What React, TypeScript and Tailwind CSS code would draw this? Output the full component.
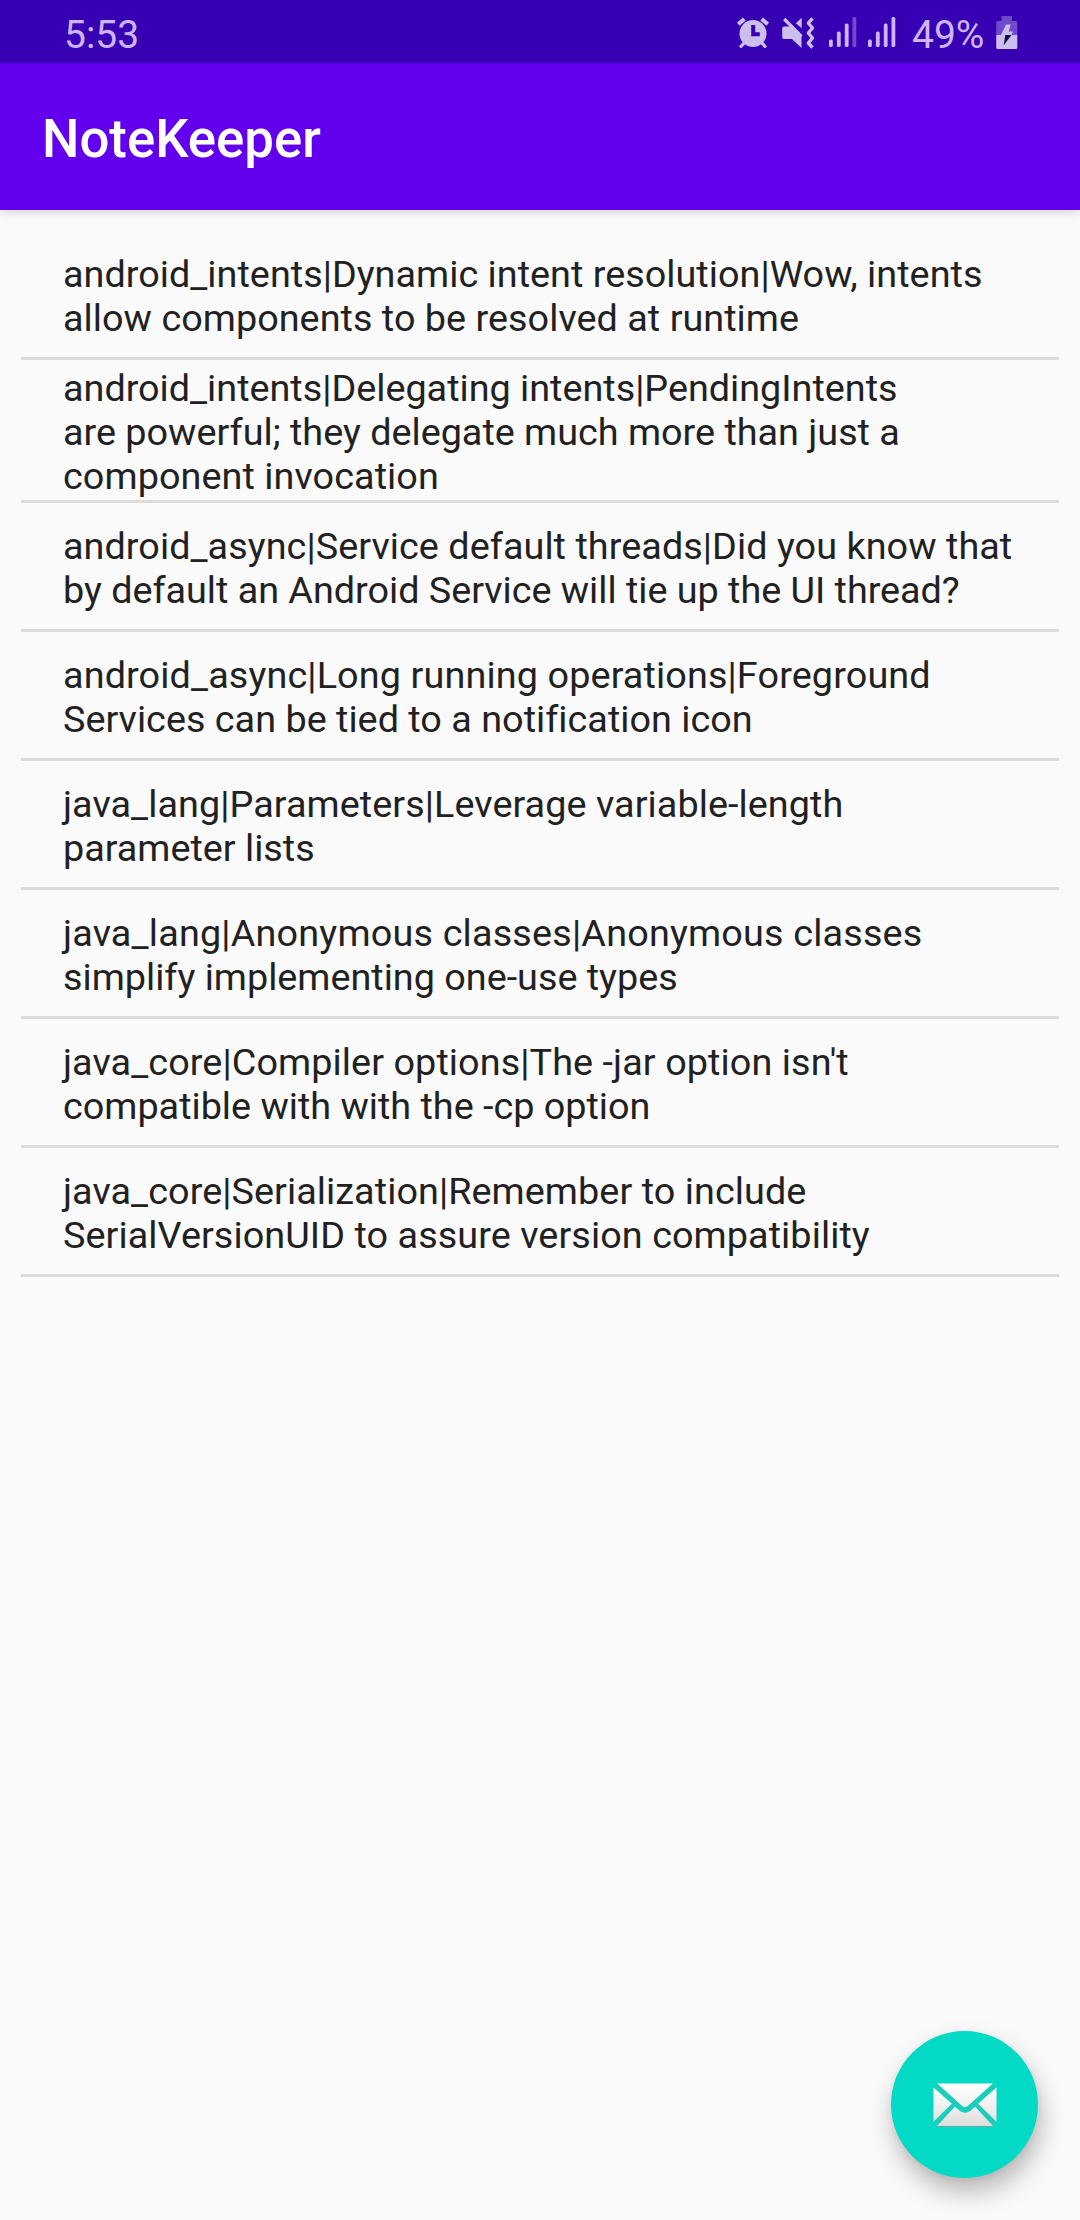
type Line = { text: string; tracking?: number };

// Each note is a list of lines; tracking is letter spacing in pixels.
const notes: Line[][] = [
  [
    { text: 'android_intents|Dynamic intent resolution|Wow, intents', tracking: 0.03 },
    { text: 'allow components to be resolved at runtime', tracking: 0.04 },
  ],
  [
    { text: 'android_intents|Delegating intents|PendingIntents' },
    { text: 'are powerful; they delegate much more than just a' },
    { text: 'component invocation', tracking: 0.08 },
  ],
  [
    { text: 'android_async|Service default threads|Did you know that', tracking: 0.06 },
    { text: 'by default an Android Service will tie up the UI thread?', tracking: -0.02 },
  ],
  [
    { text: 'android_async|Long running operations|Foreground', tracking: 0.13 },
    { text: 'Services can be tied to a notification icon', tracking: 0.02 },
  ],
  [
    { text: 'java_lang|Parameters|Leverage variable-length', tracking: 0.07 },
    { text: 'parameter lists' },
  ],
  [
    { text: 'java_lang|Anonymous classes|Anonymous classes', tracking: 0.19 },
    { text: 'simplify implementing one-use types' },
  ],
  [
    { text: "java_core|Compiler options|The -jar option isn't", tracking: 0.09 },
    { text: 'compatible with with the -cp option' },
  ],
  [
    { text: 'java_core|Serialization|Remember to include', tracking: 0.07 },
    { text: 'SerialVersionUID to assure version compatibility', tracking: 0.08 },
  ],
];

function AlarmIcon() {
  return (
    <svg className="h-[34px] w-[34px]" viewBox="0 0 34 34">
      <circle cx="17" cy="18.5" r="13.5" fill="#cdbfec" />
      <g stroke="#cdbfec" fill="none">
        <path d="M2.300 9.300 8.300 3.900M31.700 9.300 25.700 3.900" strokeWidth="4" />
        <path d="M5 31.300 9 27M29 31.300 25 27" strokeWidth="3.200" strokeLinecap="round" />
      </g>
      <path d="M17.200 10v9.200h6.600" fill="none" stroke="#3700b3" strokeWidth="4" />
    </svg>
  );
}

function MutedIcon() {
  return (
    <svg className="h-[34px] w-[34px]" viewBox="0 0 34 34">
      <g fill="#cdbfec">
        <path d="M3 11.500h6.500l11 9.500v12L11 24H3a1.800 1.800 0 0 1-1.800-1.800v-8.900A1.800 1.800 0 0 1 3 11.500Z" />
        <path d="M20.700 2.800v10.400L14.800 8.300Z" />
      </g>
      <path d="M3.200 4 20.500 21.300" stroke="#cdbfec" strokeWidth="3.200" />
      <path d="M31.500 3.300 27.300 8l4.200 5-4.200 5 4.200 5-4.200 5 4.200 4.500" fill="none" stroke="#cdbfec" strokeWidth="3.300" strokeLinejoin="round" />
    </svg>
  );
}

function SignalIcon({ weak = false }: { weak?: boolean }) {
  return (
    <svg className="h-[32px] w-[28px]" viewBox="0 0 28 32" fill="#cdb5fb">
      <rect x="0" y="23.500" width="3.800" height="7.500" rx="1.500" />
      <rect x="7.900" y="15.500" width="3.800" height="15.500" rx="1.500" />
      <rect x="15.800" y="7.500" width="3.800" height="23.500" rx="1.500" />
      <rect x="23.500" y="1" width="3.800" height="30" rx="1.500" opacity={weak ? 0.4 : 1} />
    </svg>
  );
}

function BatteryIcon() {
  return (
    <svg className="mt-[2px] h-[34px] w-[22px]" viewBox="0 0 22 34">
      <path d="M6 0h9a1 1 0 0 1 1 1v4h4a1.300 1.300 0 0 1 1.300 1.300V19H.2V6.300A1.300 1.300 0 0 1 1.500 5H5.500V1a1 1 0 0 1 1-1Z" fill="#6f4bcb" />
      <path d="M.2 19h21.100v12.500a1.500 1.500 0 0 1-1.500 1.500H1.700a1.500 1.500 0 0 1-1.500-1.500Z" fill="#cdbfec" />
      <path d="M10 8.500h4.700L12.700 15.500h4.200L15.500 19H5Z" fill="#cdbfec" />
      <path d="M9.300 19h6.200L7.600 29.500Z" fill="#16103a" />
    </svg>
  );
}

function MailIcon() {
  return (
    <svg className="h-[44px] w-[64px]" viewBox="0 0 64 44">
      <defs>
        <linearGradient id="paper" x1="0" y1="0" x2="0" y2="44" gradientUnits="userSpaceOnUse">
          <stop offset="0" stopColor="#ffffff" />
          <stop offset="0.450" stopColor="#f3f3f3" />
          <stop offset="1" stopColor="#dcdcdc" />
        </linearGradient>
      </defs>
      <path d="M2 2.500 28.500 24.500q3.500 3.800 7 0L62 2.500M2 41 20.500 21.500M62 41 43.500 21.500" fill="none" stroke="#20cbb8" strokeWidth="4" />
      <path d="M4 43.300h56" stroke="#5fa9a1" strokeWidth="1.400" />
      <g fill="url(#paper)">
        <path d="M4.200.5h55.600L35.300 22.400q-3.300 3.600-6.600 0Z" />
        <path d="M.5 4.400 18.900 20.700.5 38.700Z" />
        <path d="M63.500 4.400 45.100 20.700l18.400 18Z" />
        <path d="M4 43 21.800 23.700l4.900 4q5.300 4 10.600 0l4.900-4L60 43Z" />
      </g>
    </svg>
  );
}

export default function App() {
  return (
    <div className="relative flex h-[2220px] w-[1080px] flex-col overflow-hidden bg-[#fafafa] font-[Roboto,sans-serif]">
      <header className="relative shadow-[0_2px_10px_rgba(0,0,0,0.16)]">
        <div className="flex h-[63px] items-center justify-between bg-[#3700b3] pr-[62px] pl-[64px] text-[39px] text-[#cdb5fb]">
          <span className="pt-[8px] leading-none">5:53</span>
          <div className="flex items-center">
            <AlarmIcon />
            <span className="mr-px ml-[11px] flex"><MutedIcon /></span>
            <span className="ml-[13px] flex"><SignalIcon weak /></span>
            <span className="ml-[11px] flex"><SignalIcon /></span>
            <span className="ml-[16px] w-[84px] pt-[8px] leading-none whitespace-nowrap">49%</span>
            <BatteryIcon />
          </div>
        </div>
        <div className="flex h-[147px] items-center bg-[#6200ee] px-[42px] pt-[6px]">
          <h1 className="text-[52.75px] font-medium text-white">NoteKeeper</h1>
        </div>
      </header>
      <main className="px-[21px] pt-[21px]">
        {notes.map((lines) => (
          <div key={lines[0].text} className="flex min-h-[129px] flex-col justify-center border-b-[3px] border-[#dcdcdc] px-[42px] pt-[6px] pb-[2px] text-[37.75px] leading-[44px] text-[#212121]">
            {lines.map(({ text, tracking = 0 }) => (
              <p key={text} className="whitespace-nowrap" style={{ letterSpacing: tracking }}>{text}</p>
            ))}
          </div>
        ))}
      </main>
      <button className="absolute right-[42px] bottom-[42px] flex size-[147px] items-center justify-center rounded-full bg-[#03dac5] shadow-[3px_14px_26px_rgba(0,0,0,0.27),0_2px_6px_rgba(0,0,0,0.06)]">
        <MailIcon />
      </button>
    </div>
  );
}
